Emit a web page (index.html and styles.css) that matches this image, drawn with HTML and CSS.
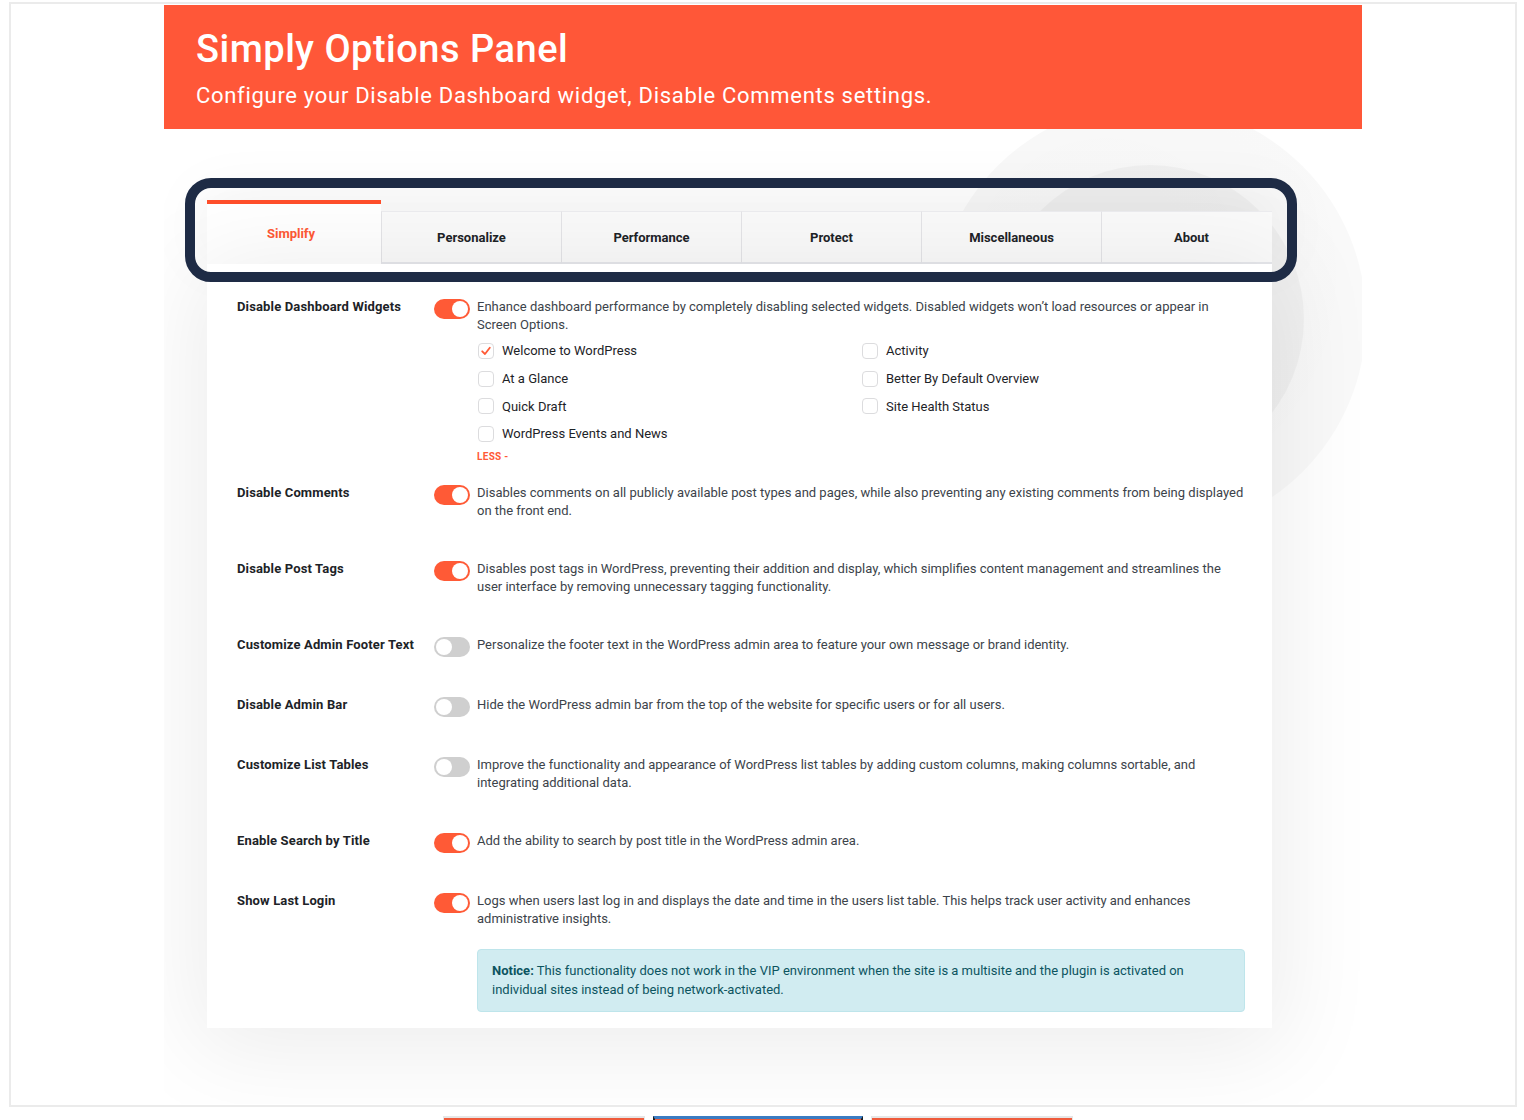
FILE: index.html
```html
<!DOCTYPE html>
<html lang="en">
<head>
<meta charset="utf-8">
<title>Simply Options Panel</title>
<link rel="stylesheet" href="styles.css">
</head>
<body>
<div class="frame">
  <div class="stage">
    <div class="deco deco-outer"></div>
    <div class="deco deco-inner"></div>
    <header class="hero">
      <h1>Simply Options Panel</h1>
      <p>Configure your Disable Dashboard widget, Disable Comments settings.</p>
    </header>
    <main class="wrap">
      <nav class="tabs">
        <div class="tab tab-first active">Simplify</div>
        <div class="tab">Personalize</div>
        <div class="tab">Performance</div>
        <div class="tab">Protect</div>
        <div class="tab">Miscellaneous</div>
        <div class="tab tab-last">About</div>
      </nav>
      <section class="card">
        <div class="row row-first">
          <div class="label">Disable Dashboard Widgets</div>
          <span class="toggle on"></span>
          <div class="desc">
            <p>Enhance dashboard performance by completely disabling selected widgets. Disabled widgets won’t load resources or appear in Screen Options.</p>
            <div class="checks">
              <label class="check"><span class="box checked"><svg viewBox="0 0 16 16" width="16" height="16"><path d="M4.2 8.3 L7 11 L11.8 4.8" fill="none" stroke="#ff5a36" stroke-width="1.8" stroke-linecap="round" stroke-linejoin="round"/></svg></span>Welcome to WordPress</label>
              <label class="check"><span class="box"></span>At a Glance</label>
              <label class="check"><span class="box"></span>Quick Draft</label>
              <label class="check"><span class="box"></span>WordPress Events and News</label>
              <label class="check"><span class="box"></span>Activity</label>
              <label class="check"><span class="box"></span>Better By Default Overview</label>
              <label class="check"><span class="box"></span>Site Health Status</label>
            </div>
            <a class="less">LESS -</a>
          </div>
        </div>
        <div class="row">
          <div class="label">Disable Comments</div>
          <span class="toggle on"></span>
          <div class="desc"><p>Disables comments on all publicly available post types and pages, while also preventing any existing comments from being displayed on the front end.</p></div>
        </div>
        <div class="row">
          <div class="label">Disable Post Tags</div>
          <span class="toggle on"></span>
          <div class="desc"><p>Disables post tags in WordPress, preventing their addition and display, which simplifies content management and streamlines the user interface by removing unnecessary tagging functionality.</p></div>
        </div>
        <div class="row">
          <div class="label">Customize Admin Footer Text</div>
          <span class="toggle"></span>
          <div class="desc"><p>Personalize the footer text in the WordPress admin area to feature your own message or brand identity.</p></div>
        </div>
        <div class="row">
          <div class="label">Disable Admin Bar</div>
          <span class="toggle"></span>
          <div class="desc"><p>Hide the WordPress admin bar from the top of the website for specific users or for all users.</p></div>
        </div>
        <div class="row">
          <div class="label">Customize List Tables</div>
          <span class="toggle"></span>
          <div class="desc"><p>Improve the functionality and appearance of WordPress list tables by adding custom columns, making columns sortable, and integrating additional data.</p></div>
        </div>
        <div class="row">
          <div class="label">Enable Search by Title</div>
          <span class="toggle on"></span>
          <div class="desc"><p>Add the ability to search by post title in the WordPress admin area.</p></div>
        </div>
        <div class="row row-last">
          <div class="label">Show Last Login</div>
          <span class="toggle on"></span>
          <div class="desc">
            <p>Logs when users last log in and displays the date and time in the users list table. This helps track user activity and enhances administrative insights.</p>
            <div class="notice"><p class="notice-line"><strong>Notice:</strong> This functionality does not work in the VIP environment when the site is a multisite and the plugin is activated on</p><p class="notice-line">individual sites instead of being network-activated.</p></div>
          </div>
        </div>
      </section>
    </main>
    <div class="annot"></div>
  </div>
</div>
<div class="thumbs">
  <div class="thumb"></div>
  <div class="thumb thumb-sel"></div>
  <div class="thumb"></div>
</div>
</body>
</html>
```

FILE: styles.css
```css
* { box-sizing: border-box; }
html, body { margin: 0; padding: 0; background: #fff; }
body {
  font-family: Roboto, "Liberation Sans", Arial, sans-serif;
  color: #1d2327;
  height: 1120px;
  overflow: hidden;
}

.frame {
  margin: 2px 0 0 9px;
  width: 1508px;
  height: 1105px;
  border: 2px solid #ebebeb;
  padding: 1px 0 0 153px;
}

.stage {
  position: relative;
  width: 1198px;
  height: 1099px;
  overflow: hidden;
  background: #fff;
}

.deco {
  position: absolute;
  border-radius: 50%;
  z-index: 0;
}
.deco-outer {
  left: 770px; top: 98px; width: 432px; height: 432px;
  background: radial-gradient(circle at 40% 40%, rgba(0,0,0,0.035), rgba(0,0,0,0.02));
}
.deco-inner {
  left: 832px; top: 160px; width: 308px; height: 308px;
  background: rgba(0,0,0,0.03);
}

.hero {
  position: relative;
  z-index: 2;
  height: 124px;
  background: #ff5738;
  color: #fff;
  padding: 22px 0 0 32px;
}
.hero h1 {
  margin: 0;
  font-size: 38px;
  line-height: 44px;
  font-weight: 500;
  letter-spacing: 0.5px;
}
.hero p {
  margin: 11px 0 0;
  font-size: 22px;
  line-height: 28px;
  font-weight: 400;
  letter-spacing: 0.7px;
}

.wrap {
  position: relative;
  z-index: 1;
  padding: 71px 90px 0 43px;
}

.tabs {
  position: relative;
  display: flex;
  align-items: flex-end;
  height: 64px;
}
.tabs::before {
  content: "";
  position: absolute;
  left: 0; right: 0; top: 11px; bottom: 0;
  box-shadow: 0 -10px 60px 8px rgba(0,0,0,0.05);
  z-index: -1;
}
.tab {
  width: 180px;
  height: 53px;
  display: flex;
  align-items: center;
  justify-content: center;
  background: #fafafa;
  border-left: 1px solid #e4e4e7;
  border-top: 1px solid #ececef;
  border-bottom: 2px solid #e6e7eb;
  font-size: 13px;
  font-weight: 700;
  color: #1d2327;
}
.tab-last { width: 171px; padding-left: 9px; }
.tab.active {
  width: 174px;
  height: 64px;
  background: #fff;
  border: 0;
  border-top: 4px solid #ff4f2b;
  color: #ff5a36;
  padding: 0 6px 2px 0;
}

.card {
  background: #fff;
  padding: 14px 27px 0 30px;
  box-shadow: 0 10px 90px 12px rgba(0,0,0,0.075);
  position: relative;
}

.row {
  display: grid;
  grid-template-columns: 190px 36px 768px;
  column-gap: 7px;
  padding: 20px 0;
  align-items: start;
}
.row-first { padding-bottom: 0; }
.row-last { padding-bottom: 16px; }

.label {
  font-size: 13px;
  line-height: 18px;
  font-weight: 700;
  color: #1d2327;
  letter-spacing: 0.15px;
  white-space: nowrap;
}

.toggle {
  position: relative;
  top: 1px;
  width: 36px;
  height: 20px;
  border-radius: 10px;
  background: #cfcfcf;
}
.toggle::after {
  content: "";
  position: absolute;
  top: 2px; left: 2px;
  width: 16px; height: 16px;
  border-radius: 50%;
  background: #fff;
}
.toggle.on { background: #ff5a36; }
.toggle.on::after { left: 18px; }

.desc p {
  margin: 0;
  font-size: 13px;
  line-height: 18px;
  color: #3c434a;
}

.checks {
  margin-top: 3px;
  display: grid;
  grid-template-columns: 384px 384px;
  grid-template-rows: repeat(4, 27.7px);
  grid-auto-flow: column;
}
.check {
  display: flex;
  align-items: center;
  gap: 8px;
  font-size: 13px;
  color: #1d2327;
  padding-left: 1px;
}
.box {
  width: 16px;
  height: 16px;
  border: 1px solid #dcdcde;
  border-radius: 4px;
  background: #fff;
  display: inline-flex;
  align-items: center;
  justify-content: center;
}
.box svg { display: block; margin: -1px; }

.less {
  display: block;
  margin-top: 2px;
  font-size: 10px;
  line-height: 14px;
  font-weight: 700;
  color: #ff5a36;
  letter-spacing: 0.3px;
}

.notice {
  margin-top: 21px;
  background: #d1ecf1;
  border: 1px solid #bee5eb;
  border-radius: 4px;
  padding: 11px 14px;
}
.desc .notice-line {
  margin: 0;
  color: #0c5460;
  font-size: 13px;
  line-height: 19.5px;
  white-space: nowrap;
}
.notice strong { font-weight: 700; }

.annot {
  position: absolute;
  z-index: 5;
  left: 21px;
  top: 173px;
  width: 1112px;
  height: 104px;
  border: 10px solid #1e2b45;
  border-radius: 26px;
}

.thumbs {
  position: absolute;
  top: 1116px;
  left: 443px;
  display: flex;
  gap: 8px;
}
.thumb {
  width: 202px;
  height: 10px;
  border: 1px solid #e6e6e6;
  border-top: 2px solid #e6e6e6;
  background: #fafafa;
  box-shadow: inset 0 2px 0 #ef5b3c;
}
.thumb-sel {
  width: 210px;
  border: 2px solid #1c1c1c;
  border-top: 3px solid #3b7cc2;
}
```
